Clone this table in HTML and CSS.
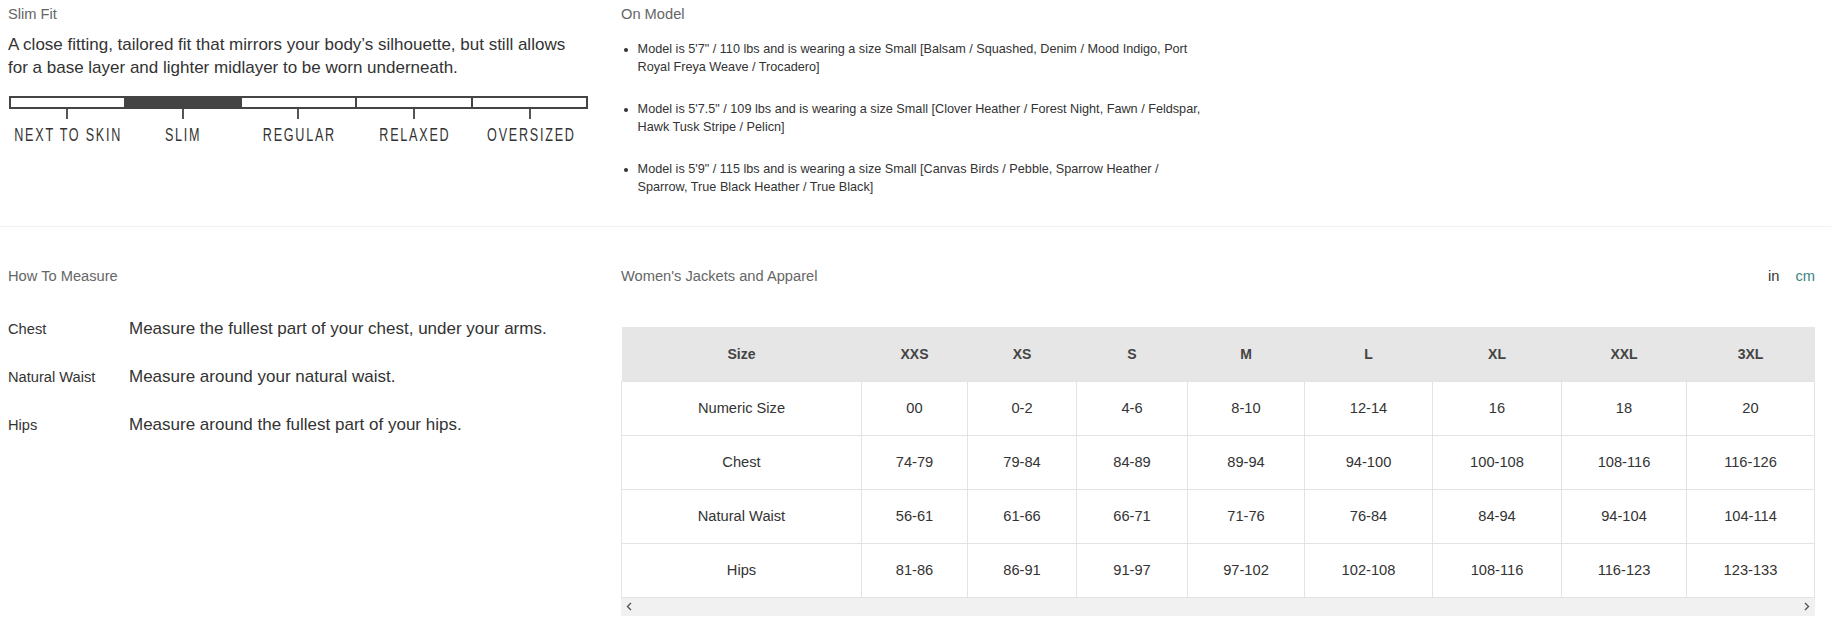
FILE: index.html
```html
<!DOCTYPE html>
<html lang="en">
<head>
<meta charset="utf-8">
<title>Size Guide</title>
<link rel="stylesheet" href="styles.css">
</head>
<body>
<div class="page">
  <section class="sec sec-top">
    <div class="col">
      <h3 class="heading">Slim Fit</h3>
      <p class="fit-desc">A close fitting, tailored fit that mirrors your body’s silhouette, but still allows for a base layer and lighter midlayer to be worn underneath.</p>
      <div class="fit-scale">
        <div class="fit-bar">
          <span class="seg"></span>
          <span class="seg seg-active"></span>
          <span class="seg"></span>
          <span class="seg"></span>
          <span class="seg"></span>
        </div>
        <div class="fit-labels">
          <div class="fit-label"><span class="tick"></span><span class="lbl">NEXT TO SKIN</span></div>
          <div class="fit-label"><span class="tick"></span><span class="lbl">SLIM</span></div>
          <div class="fit-label"><span class="tick"></span><span class="lbl">REGULAR</span></div>
          <div class="fit-label"><span class="tick"></span><span class="lbl">RELAXED</span></div>
          <div class="fit-label"><span class="tick"></span><span class="lbl">OVERSIZED</span></div>
        </div>
      </div>
    </div>
    <div class="col">
      <h3 class="heading">On Model</h3>
      <ul class="model-list">
        <li>Model is 5'7" / 110 lbs and is wearing a size Small [Balsam / Squashed, Denim / Mood Indigo, Port Royal Freya Weave / Trocadero]</li>
        <li>Model is 5'7.5" / 109 lbs and is wearing a size Small [Clover Heather / Forest Night, Fawn / Feldspar, Hawk Tusk Stripe / Pelicn]</li>
        <li>Model is 5'9" / 115 lbs and is wearing a size Small [Canvas Birds / Pebble, Sparrow Heather / Sparrow, True Black Heather / True Black]</li>
      </ul>
    </div>
  </section>

  <section class="sec sec-bottom">
    <div class="col">
      <h3 class="heading">How To Measure</h3>
      <div class="measure">
        <div class="m-label">Chest</div>
        <div class="m-desc">Measure the fullest part of your chest, under your arms.</div>
        <div class="m-label">Natural Waist</div>
        <div class="m-desc">Measure around your natural waist.</div>
        <div class="m-label">Hips</div>
        <div class="m-desc">Measure around the fullest part of your hips.</div>
      </div>
    </div>
    <div class="col">
      <div class="chart-head">
        <h3 class="heading">Women's Jackets and Apparel</h3>
        <div class="units"><span class="unit-in">in</span><span class="unit-cm">cm</span></div>
      </div>
      <div class="table-wrap">
        <table class="size-table">
          <colgroup>
            <col class="c-size"><col class="c-xxs"><col class="c-xs"><col class="c-s"><col class="c-m"><col class="c-l"><col class="c-xl"><col class="c-xxl"><col class="c-3xl">
          </colgroup>
          <thead>
            <tr><th>Size</th><th>XXS</th><th>XS</th><th>S</th><th>M</th><th>L</th><th>XL</th><th>XXL</th><th>3XL</th></tr>
          </thead>
          <tbody>
            <tr><td>Numeric Size</td><td>00</td><td>0-2</td><td>4-6</td><td>8-10</td><td>12-14</td><td>16</td><td>18</td><td>20</td></tr>
            <tr><td>Chest</td><td>74-79</td><td>79-84</td><td>84-89</td><td>89-94</td><td>94-100</td><td>100-108</td><td>108-116</td><td>116-126</td></tr>
            <tr><td>Natural Waist</td><td>56-61</td><td>61-66</td><td>66-71</td><td>71-76</td><td>76-84</td><td>84-94</td><td>94-104</td><td>104-114</td></tr>
            <tr><td>Hips</td><td>81-86</td><td>86-91</td><td>91-97</td><td>97-102</td><td>102-108</td><td>108-116</td><td>116-123</td><td>123-133</td></tr>
          </tbody>
        </table>
        <div class="hscroll">
          <svg class="arrow" width="6" height="9" viewBox="0 0 6 9"><polyline points="5,1 1.5,4.5 5,8" fill="none" stroke="#555" stroke-width="1.4"/></svg>
          <svg class="arrow" width="6" height="9" viewBox="0 0 6 9"><polyline points="1,1 4.5,4.5 1,8" fill="none" stroke="#555" stroke-width="1.4"/></svg>
        </div>
      </div>
    </div>
  </section>
</div>
</body>
</html>
```

FILE: styles.css
```css
* { box-sizing: border-box; }

html, body {
  margin: 0;
  padding: 0;
  background: #ffffff;
}

body {
  font-family: "Liberation Sans", Arial, sans-serif;
  color: #333333;
}

.sec {
  display: grid;
  grid-template-columns: 578px 1fr;
  column-gap: 35px;
}

.sec-top {
  padding: 3px 17px 30px 8px;
  border-bottom: 1px solid #f1f1f1;
}

.sec-bottom {
  padding: 37.5px 17px 0 8px;
}

.heading {
  margin: 0;
  font-size: 14.67px;
  line-height: 22px;
  font-weight: normal;
  color: #666666;
}

/* Fit scale */
.fit-desc {
  margin: 7.5px 0 0;
  font-size: 17px;
  line-height: 23.5px;
  color: #333333;
}

.fit-scale {
  width: 579px;
  margin-top: 16.5px;
  margin-left: 1px;
}

.fit-bar {
  display: flex;
  height: 13px;
  border: 2px solid #444444;
}

.seg {
  flex: 1 1 0;
}

.seg + .seg {
  border-left: 2px solid #444444;
}

.seg-active {
  background: #444444;
}

.fit-labels {
  display: flex;
}

.fit-label {
  flex: 1 1 0;
  min-width: 0;
  display: flex;
  flex-direction: column;
  align-items: center;
}

.tick {
  display: block;
  flex: none;
  width: 2px;
  height: 10px;
  background: #555555;
}

.lbl {
  display: block;
  flex: none;
  margin-top: 6px;
  padding-left: 2.5px;
  font-size: 18px;
  line-height: 20px;
  letter-spacing: 2.5px;
  white-space: nowrap;
  color: #333333;
  transform: scaleX(0.7);
}

/* On model */
.model-list {
  margin: 15px 0 0;
  padding-left: 16.6px;
  max-width: 585px;
  font-size: 12.67px;
  line-height: 18px;
  color: #333333;
}

.model-list li {
  margin-bottom: 24px;
}

.model-list li:last-child {
  margin-bottom: 0;
}

/* How to measure */
.measure {
  margin-top: 30.7px;
  display: grid;
  grid-template-columns: 121px 1fr;
  row-gap: 24px;
  align-items: baseline;
}

.m-label {
  font-size: 14.67px;
  line-height: 24px;
  color: #333333;
}

.m-desc {
  font-size: 17px;
  line-height: 24px;
  color: #333333;
}

/* Chart */
.chart-head {
  display: flex;
  justify-content: space-between;
  align-items: baseline;
}

.units {
  display: flex;
  gap: 16px;
  font-size: 14.67px;
  line-height: 22px;
}

.unit-in { color: #333333; }
.unit-cm { color: #3b8585; }

.table-wrap {
  margin-top: 40.8px;
}

.size-table {
  width: 100%;
  border-collapse: collapse;
  table-layout: fixed;
  font-size: 14.67px;
}

.c-size { width: 240px; }
.c-xxs { width: 106px; }
.c-xs { width: 109px; }
.c-s { width: 111px; }
.c-m { width: 117px; }
.c-l { width: 128px; }
.c-xl { width: 129px; }
.c-xxl { width: 125px; }
.c-3xl { width: 128px; }

.size-table th {
  height: 54px;
  padding: 0;
  background: #e6e6e6;
  font-size: 14px;
  font-weight: bold;
  color: #444444;
  text-align: center;
}

.size-table td {
  height: 54px;
  padding: 0;
  border: 1px solid #e3e3e3;
  text-align: center;
  color: #333333;
}

.hscroll {
  height: 18px;
  background: #f1f1f1;
  display: flex;
  justify-content: space-between;
  align-items: center;
  padding: 0 5px;
}

.arrow {
  display: block;
}
```
